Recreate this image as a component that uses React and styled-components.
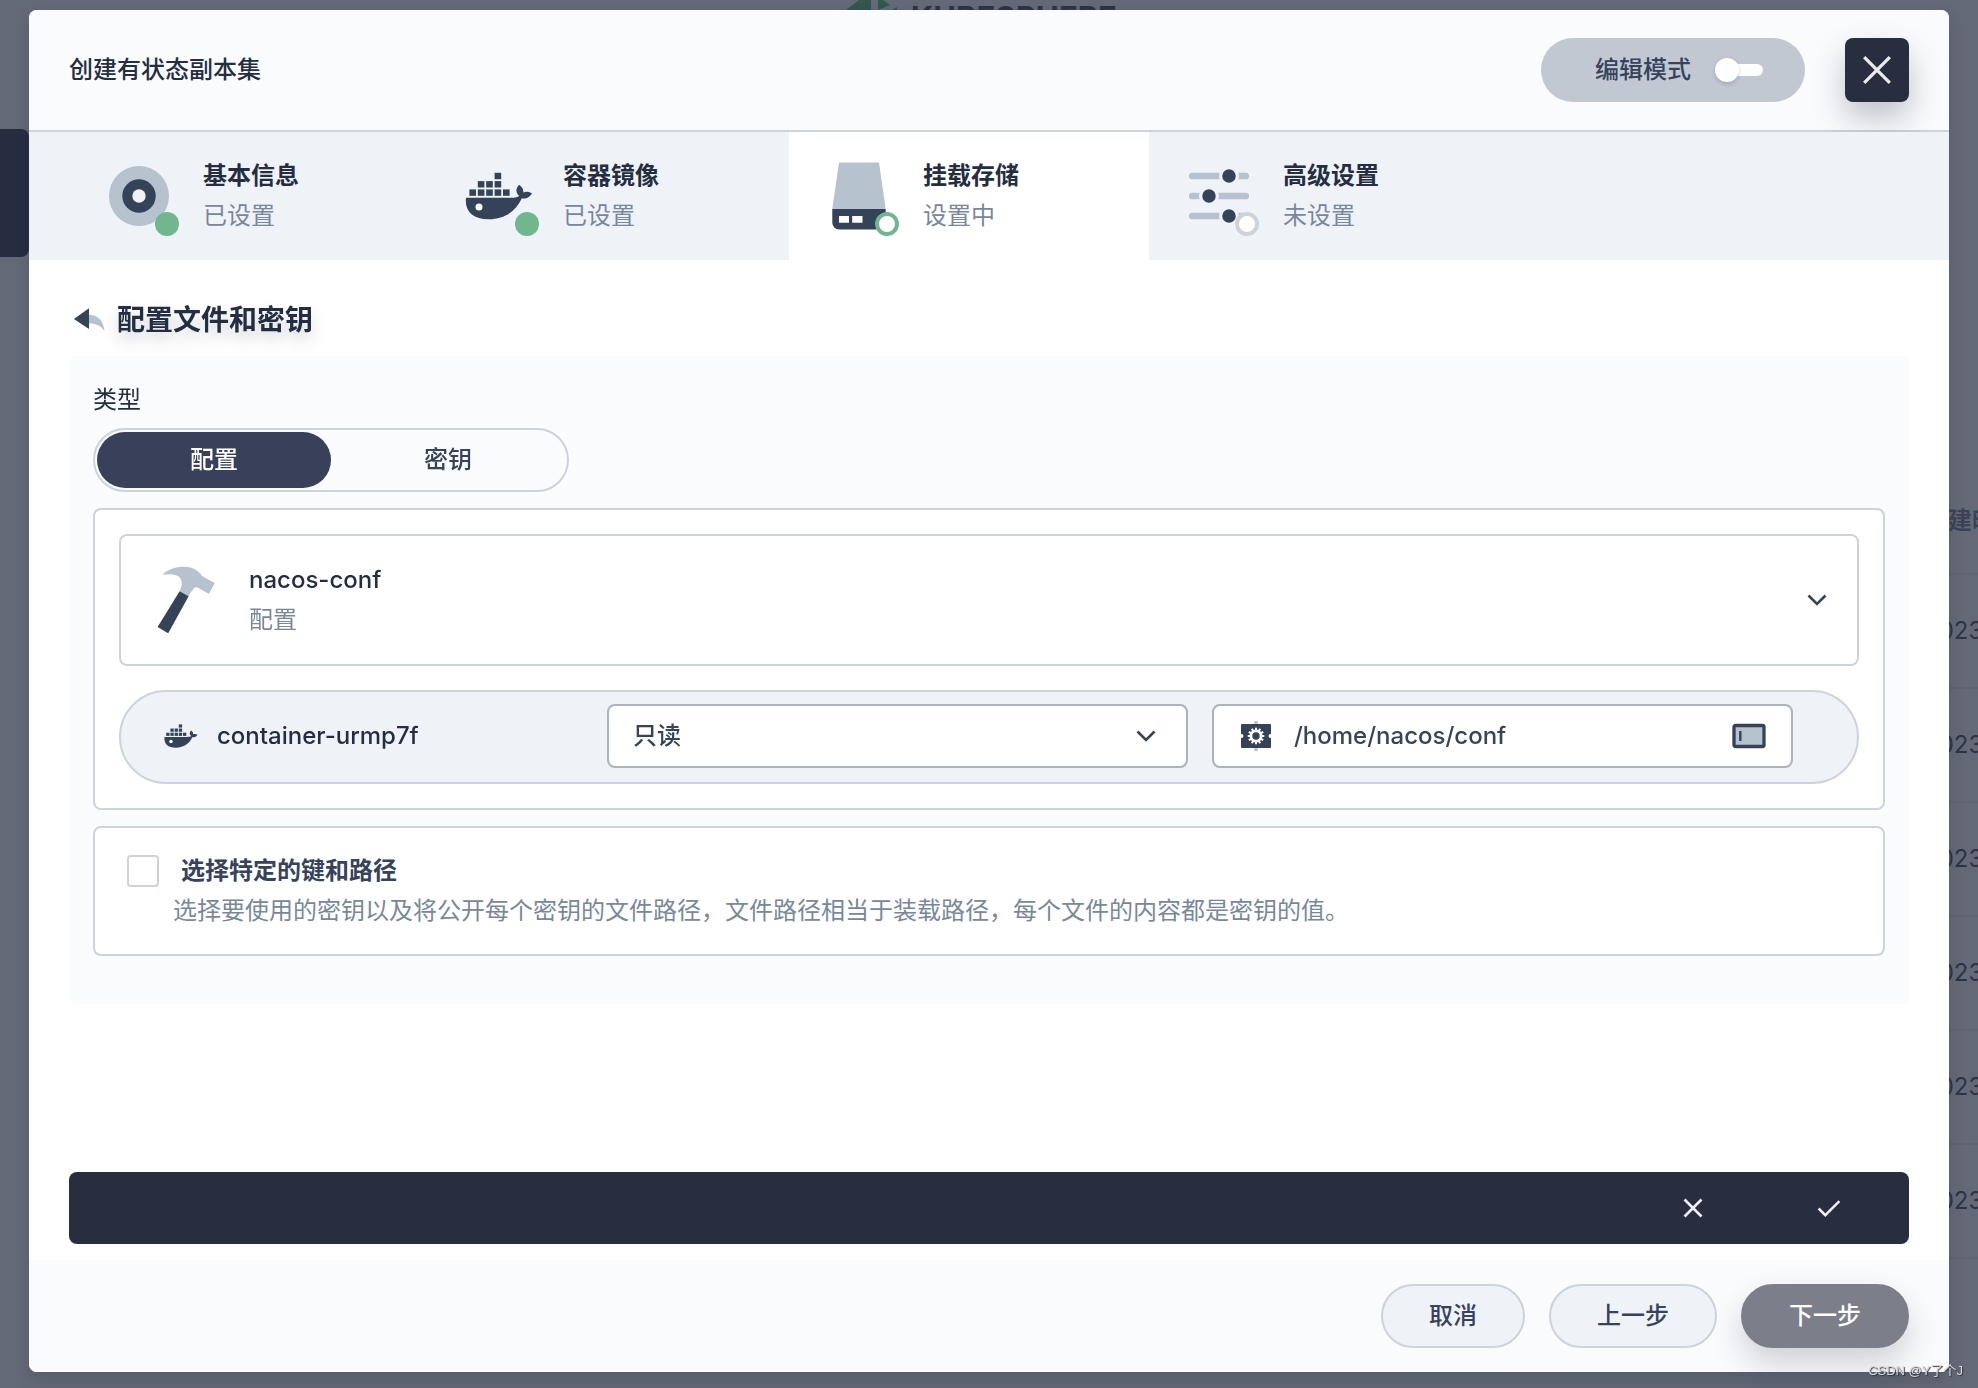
import React, { useState } from 'react'
import styled, { createGlobalStyle, css } from 'styled-components'

const GlobalStyle = createGlobalStyle`
  * {
    box-sizing: border-box;
  }
  body {
    margin: 0;
    background: #646977;
    color: #242e42;
    font-family: Inter, "Noto Sans CJK SC", sans-serif;
    font-size: 24px;
    line-height: 40px;
  }
  button, input, select {
    margin: 0;
    padding: 0;
    border: none;
    background: none;
    color: inherit;
    font: inherit;
    outline: none;
  }
  button {
    cursor: pointer;
  }
  h1, h2, p {
    margin: 0;
  }
  svg {
    display: block;
    flex: none;
  }
`

/* dimmed page behind the dialog */
const Backdrop = styled.div`
  position: fixed;
  inset: 0;
  overflow: hidden;
  display: flex;
  flex-direction: column;
  background: #646977;
`
const BackHeader = styled.div`
  display: flex;
  justify-content: center;
  align-items: flex-start;
  gap: 14px;
  height: 129px;
  padding-right: 14px;
  color: #2d3347;
  font-size: 31px;
  font-weight: 700;
  line-height: 36px;
`
const BackMain = styled.div`
  display: flex;
  justify-content: space-between;
`
const BackNav = styled.div`
  width: 29px;
  height: 128px;
  border-radius: 0 8px 8px 0;
  background: #262d40;
`
const BackTable = styled.div`
  width: 54px;
  padding-top: 340px;
  overflow: hidden;
  white-space: nowrap;
`
const BackHead = styled.div`
  height: 106px;
  padding-top: 32px;
  border-bottom: 2px solid #5e6473;
  color: #3b4359;
  font-weight: 600;
`
const BackRow = styled.div`
  height: 114px;
  padding-top: 36px;
  border-bottom: 2px solid #5e6473;
  color: #2c3347;
`

const Overlay = styled.div`
  position: relative;
  min-height: 100vh;
  padding: 10px 29px 16px;
  display: flex;
`
const Modal = styled.div`
  flex: 1;
  display: flex;
  flex-direction: column;
  border-radius: 8px;
  background: #fff;
  box-shadow: 0 8px 16px rgba(36, 46, 66, 0.2);
`
const Header = styled.header`
  display: flex;
  align-items: center;
  justify-content: space-between;
  padding: 28px 40px;
  border-bottom: 2px solid #ccd3db;
  border-radius: 8px 8px 0 0;
  background: #fafbfd;
`
const Title = styled.h1`
  font-size: 24px;
  font-weight: 500;
`
const HeaderActions = styled.div`
  display: flex;
  gap: 40px;
`
const ModeSwitch = styled.label`
  display: flex;
  align-items: center;
  gap: 24px;
  height: 64px;
  padding: 0 42px 0 54px;
  border-radius: 32px;
  background: #c1c8d1;
  color: #36435c;
  font-weight: 500;
  cursor: pointer;
`
const Toggle = styled.input`
  appearance: none;
  display: flex;
  align-items: center;
  width: 48px;
  height: 12px;
  border-radius: 6px;
  background: #fff;

  &::before {
    content: "";
    width: 24px;
    height: 24px;
    border-radius: 50%;
    background: #fff;
    box-shadow: 0 2px 4px rgba(36, 46, 66, 0.2);
  }
  &:checked {
    justify-content: flex-end;
  }
`
const CloseButton = styled.button`
  display: flex;
  align-items: center;
  justify-content: center;
  width: 64px;
  height: 64px;
  border-radius: 8px;
  background: #282d40;
  box-shadow: 0 16px 32px rgba(36, 46, 66, 0.28);
`

const Tabs = styled.nav`
  display: flex;
  padding: 0 40px;
  background: #eff2f7;
`
const Tab = styled.button`
  display: flex;
  align-items: center;
  gap: 24px;
  width: 360px;
  height: 128px;
  padding-left: 30px;
  text-align: left;
  background: ${(props) => (props.$active ? '#fff' : 'transparent')};
`
const TabIcon = styled.span`
  position: relative;
`
const dotStyles = {
  done: css`
    background: #70b78f;
  `,
  current: css`
    background: #fff;
    border: 4px solid #70b78f;
  `,
  pending: css`
    background: #fff;
    border: 4px solid #ccd3db;
  `,
}
const Dot = styled.span`
  position: absolute;
  right: 0;
  bottom: 0;
  width: 24px;
  height: 24px;
  border-radius: 50%;
  ${(props) => dotStyles[props.$state]}
`
const TwoLines = styled.span`
  display: flex;
  flex-direction: column;
`
const Strong = styled.span`
  font-weight: ${(props) => (props.$bold ? 600 : 500)};
`
const Muted = styled.span`
  color: #79879c;
`

const Body = styled.main`
  flex: 1;
  display: flex;
  flex-direction: column;
  padding: 40px 40px 16px;
`
const SubTitle = styled.div`
  display: flex;
  align-items: center;
  gap: 8px;
  margin-bottom: 16px;
`
const SubTitleText = styled.h2`
  font-size: 28px;
  font-weight: 600;
  text-shadow: 0 8px 16px rgba(36, 46, 66, 0.2);
`
const Panel = styled.section`
  display: flex;
  flex-direction: column;
  gap: 16px;
  padding: 24px 24px 48px;
  border-radius: 8px;
  background: #fafbfd;
`
const TypeField = styled.div`
  display: flex;
  flex-direction: column;
  align-items: flex-start;
  gap: 8px;
`
const Segmented = styled.div`
  display: flex;
  padding: 2px;
  border: 2px solid #ccd3db;
  border-radius: 32px;
`
const Segment = styled.button`
  width: 234px;
  height: 56px;
  border-radius: 28px;
  font-weight: 500;
  color: ${(props) => (props.$active ? '#fff' : '#36435c')};
  background: ${(props) => (props.$active ? '#384159' : 'transparent')};
`
const Card = styled.div`
  display: flex;
  flex-direction: column;
  gap: 24px;
  padding: 24px;
  border: 2px solid #ccd3db;
  border-radius: 8px;
  background: #fff;
`
const ConfigSelect = styled.button`
  display: flex;
  align-items: center;
  gap: 24px;
  padding: 24px;
  border: 2px solid #ccd3db;
  border-radius: 8px;
  text-align: left;

  ${TwoLines} {
    flex: 1;
  }
`
const ContainerRow = styled.div`
  display: grid;
  grid-template-columns: 422px minmax(0, 1fr) minmax(0, 1fr);
  gap: 24px;
  padding: 12px 64px 14px 40px;
  border: 2px solid #ccd3db;
  border-radius: 47px;
  background: #eff2f7;
`
const ContainerName = styled.div`
  display: flex;
  align-items: center;
  gap: 16px;
  font-weight: 500;
`
const Field = styled.label`
  display: flex;
  align-items: center;
  gap: 18px;
  height: 64px;
  padding: 0 ${(props) => props.$pad}px;
  border: 2px solid #abb4be;
  border-radius: 8px;
  background: #fff;
  color: #36435c;
  font-weight: 500;
`
const Select = styled.select`
  appearance: none;
  flex: 1;
  min-width: 0;
  height: 40px;
`
const PathInput = styled.input`
  flex: 1;
  min-width: 0;
  height: 40px;
`
const KeyCard = styled.label`
  display: grid;
  grid-template-columns: 32px 1fr;
  column-gap: 22px;
  align-items: center;
  padding: 23px 32px;
  border: 2px solid #ccd3db;
  border-radius: 8px;
  background: #fff;
  color: #36435c;
`
const Checkbox = styled.input`
  appearance: none;
  width: 32px;
  height: 32px;
  border: 2px solid #ccd3db;
  border-radius: 4px;
  background: #fff;

  &:checked {
    background: #36435c;
  }
`
const KeyHint = styled(Muted)`
  grid-column: 1 / -1;
  padding-left: 46px;
`
const ActionBar = styled.div`
  display: flex;
  justify-content: flex-end;
  gap: 96px;
  margin-top: auto;
  padding: 16px 60px;
  border-radius: 8px;
  background: #282d40;
`
const Footer = styled.footer`
  display: flex;
  justify-content: flex-end;
  gap: 24px;
  padding: 24px 40px;
  border-radius: 0 0 8px 8px;
  background: #fafbfd;
`
const FooterButton = styled.button`
  height: 64px;
  padding: 0 46px;
  border: 2px solid #ccd3db;
  border-radius: 32px;
  background: #eff2f7;
  color: #36435c;
  font-weight: 500;

  ${(props) =>
    props.$primary &&
    css`
      border-color: #7c7f8a;
      background: #7c7f8a;
      color: #fff;
      box-shadow: 0 16px 32px rgba(36, 46, 66, 0.2);
    `}
`
const Watermark = styled.div`
  position: absolute;
  right: 15px;
  bottom: 5px;
  color: #d6d8dc;
  font-family: "Liberation Sans", "Noto Sans CJK SC", sans-serif;
  font-size: 13px;
  line-height: 24px;
  text-shadow: 1px 1px 1px #333;
`

const DARK = '#344357'
const LIGHT = '#b6c2cd'

const BasicIcon = () => (
  <svg width="80" height="80" viewBox="0 0 80 80">
    <circle cx="40" cy="40" r="30" fill={LIGHT} />
    <circle cx="40" cy="40" r="16.7" fill={DARK} />
    <circle cx="40" cy="40" r="6.7" fill="#eff2f7" />
  </svg>
)

const boxes = [
  [35.6, 16.8],
  [18.8, 25.1], [27.2, 25.1], [35.6, 25.1],
  [10.4, 33.4], [18.8, 33.4], [27.2, 33.4], [35.6, 33.4], [44, 33.4],
]

const DockerIcon = ({ size = 80 }) => (
  <svg width={size} height={size} viewBox="0 0 80 80" fill={DARK}>
    {boxes.map(([x, y]) => (
      <rect key={`${x}-${y}`} x={x} y={y} width="6.6" height="6.4" />
    ))}
    <path d="M7 41.8H52c4 0 6.8-.6 8.3-1.8C56.6 36.800 56.4 32.8 60 28.8c3 1.9 4.6 4.2 4.3 7.6 2.900-1 6-.7 8.7 1C71 41 67.5 42.7 62.7 42.6 57.5 54 47 63.3 29.5 63.3 14 63.3 5.5 55.5 7 41.8Z" />
    <circle cx="20" cy="51" r="3.5" fill="#fff" />
  </svg>
)

const StorageIcon = () => (
  <svg width="80" height="80" viewBox="0 0 80 80">
    <path d="M20 6.5H60L66.7 53H13.3Z" fill={LIGHT} />
    <path d="M13.3 53H66.7V66.7a6.7 6.7 0 0 1-6.7 6.7H20a6.7 6.7 0 0 1-6.7-6.7Z" fill={DARK} />
    <path d="M20 60H30V66.700H20ZM33.2 60H43.5V66.700H33.2Z" fill="#fff" />
  </svg>
)

const AdvancedIcon = () => (
  <svg width="80" height="80" viewBox="0 0 80 80">
    <path d="M13.3 20H66.7M13.3 40H66.7M13.3 60H66.7" stroke={LIGHT} strokeWidth="6.7" strokeLinecap="round" />
    <g fill={DARK} stroke="#eff2f7" strokeWidth="3.3">
      <circle cx="50" cy="20" r="8.4" />
      <circle cx="30" cy="40" r="8.4" />
      <circle cx="50" cy="60" r="8.4" />
    </g>
  </svg>
)

const HammerIcon = () => (
  <svg width="80" height="80" viewBox="0 0 80 80">
    <path d="M17.4 14.8C23 9 31 6.7 38.7 6.7c8 0 14.3 3 18.3 9.3l12.7 7L64 34l-10.5-6c-2-1.1-3.5-.8-4.8.8-2 2.4-3.8 4.7-5.1 7.4L34.6 31.3C36.8 27 37.5 23.5 36.2 20 34.5 15.5 29 13.2 17.4 14.8Z" fill={LIGHT} />
    <path d="M34.6 31.3 43.6 36.3 23.2 73.3 12.6 67Z" fill={DARK} />
  </svg>
)

const BackIcon = () => (
  <svg width="40" height="40" viewBox="0 0 40 40">
    <path d="M19 14.8C28 14.5 34.5 20 35.5 31 31.5 25.5 27 23.3 19 23.5Z" fill={LIGHT} />
    <path d="M4.9 19 20 8.3V29Z" fill={DARK} />
  </svg>
)

const ChevronIcon = () => (
  <svg width="32" height="32" viewBox="0 0 32 32" fill="none" stroke={DARK} strokeWidth="2.6">
    <path d="M7.5 11.5 16 20 24.5 11.5" />
  </svg>
)

const CrossIcon = () => (
  <svg width="40" height="40" viewBox="0 0 40 40" fill="none" stroke="#eff0f2" strokeWidth="2.6">
    <path d="M11.5 11.5 28.5 28.5M28.5 11.5 11.5 28.5" />
  </svg>
)

const CloseIcon = () => (
  <svg width="40" height="40" viewBox="0 0 40 40" fill="none" stroke="#eaebed" strokeWidth="3.3">
    <path d="M7.2 7.2 32.8 32.8M32.8 7.2 7.2 32.8" />
  </svg>
)

const CheckIcon = () => (
  <svg width="40" height="40" viewBox="0 0 40 40" fill="none" stroke="#eff0f2" strokeWidth="2.5">
    <path d="M9.6 20.5 16.3 27.2 30.4 13.1" />
  </svg>
)

const teeth = [0, 30, 60, 90, 120, 150, 180, 210, 240, 270, 300, 330]

const GearIcon = () => (
  <svg width="40" height="40" viewBox="0 0 40 40">
    <path d="M18.3 5H21.7V35H18.3Z" fill={LIGHT} />
    <rect x="5" y="8" width="30" height="24" rx="1" fill={DARK} />
    <g fill="#fff">
      <circle cx="5.5" cy="20" r="2" />
      <circle cx="34.5" cy="20" r="2" />
      {teeth.map((deg) => (
        <rect key={deg} x="19" y="11.7" width="2" height="4" transform={`rotate(${deg} 20 20)`} />
      ))}
      <circle cx="20" cy="20" r="6.5" />
    </g>
    <circle cx="20" cy="20" r="3.7" fill={DARK} />
  </svg>
)

const SubPathIcon = () => (
  <svg width="40" height="40" viewBox="0 0 40 40">
    <rect x="5" y="9.5" width="30" height="21" rx="1.5" fill={LIGHT} stroke={DARK} strokeWidth="3.3" />
    <path d="M11.3 15V25" stroke={DARK} strokeWidth="2.4" />
  </svg>
)

const LogoMark = () => (
  <svg width="50" height="10" viewBox="0 0 50 10" fill="#31574f">
    <path d="M0 9 12 0H24V10H0ZM31 0H36L43 5 31 10Z" />
    <path d="M50 7V10H45Z" />
  </svg>
)

const steps = [
  { title: '基本信息', desc: '已设置', state: 'done', icon: <BasicIcon /> },
  { title: '容器镜像', desc: '已设置', state: 'done', icon: <DockerIcon /> },
  { title: '挂载存储', desc: '设置中', state: 'current', icon: <StorageIcon /> },
  { title: '高级设置', desc: '未设置', state: 'pending', icon: <AdvancedIcon /> },
]

const App = () => {
  const [type, setType] = useState('配置')
  const [path, setPath] = useState('/home/nacos/conf')

  return (
    <>
      <GlobalStyle />
      <Backdrop aria-hidden="true">
        <BackHeader>
          <LogoMark />
          <span>KUBESPHERE</span>
        </BackHeader>
        <BackMain>
          <BackNav />
          <BackTable>
            <BackHead>创建时间</BackHead>
            {[1, 2, 3, 4, 5, 6].map((row) => (
              <BackRow key={row}>2023</BackRow>
            ))}
          </BackTable>
        </BackMain>
      </Backdrop>

      <Overlay>
        <Modal role="dialog" aria-labelledby="dialog-title">
          <Header>
            <Title id="dialog-title">创建有状态副本集</Title>
            <HeaderActions>
              <ModeSwitch>
                编辑模式
                <Toggle type="checkbox" />
              </ModeSwitch>
              <CloseButton aria-label="关闭">
                <CloseIcon />
              </CloseButton>
            </HeaderActions>
          </Header>

          <Tabs>
            {steps.map((step) => (
              <Tab key={step.title} $active={step.state === 'current'}>
                <TabIcon>
                  {step.icon}
                  <Dot $state={step.state} />
                </TabIcon>
                <TwoLines>
                  <Strong $bold>{step.title}</Strong>
                  <Muted>{step.desc}</Muted>
                </TwoLines>
              </Tab>
            ))}
          </Tabs>

          <Body>
            <SubTitle>
              <button aria-label="返回">
                <BackIcon />
              </button>
              <SubTitleText>配置文件和密钥</SubTitleText>
            </SubTitle>

            <Panel>
              <TypeField>
                <span id="type-label">类型</span>
                <Segmented role="group" aria-labelledby="type-label">
                  {['配置', '密钥'].map((item) => (
                    <Segment key={item} $active={type === item} onClick={() => setType(item)}>
                      {item}
                    </Segment>
                  ))}
                </Segmented>
              </TypeField>

              <Card>
                <ConfigSelect aria-haspopup="listbox">
                  <HammerIcon />
                  <TwoLines>
                    <Strong>nacos-conf</Strong>
                    <Muted>配置</Muted>
                  </TwoLines>
                  <ChevronIcon />
                </ConfigSelect>
                <ContainerRow>
                  <ContainerName>
                    <DockerIcon size={40} />
                    container-urmp7f
                  </ContainerName>
                  <Field $pad={24}>
                    <Select aria-label="读写权限" defaultValue="只读">
                      <option>只读</option>
                    </Select>
                    <ChevronIcon />
                  </Field>
                  <Field $pad={22}>
                    <GearIcon />
                    <PathInput
                      type="text"
                      aria-label="挂载路径"
                      value={path}
                      onChange={(e) => setPath(e.target.value)}
                    />
                    <SubPathIcon />
                  </Field>
                </ContainerRow>
              </Card>

              <KeyCard>
                <Checkbox type="checkbox" />
                <Strong $bold>选择特定的键和路径</Strong>
                <KeyHint>
                  选择要使用的密钥以及将公开每个密钥的文件路径，文件路径相当于装载路径，每个文件的内容都是密钥的值。
                </KeyHint>
              </KeyCard>
            </Panel>

            <ActionBar>
              <button aria-label="放弃">
                <CrossIcon />
              </button>
              <button aria-label="确定">
                <CheckIcon />
              </button>
            </ActionBar>
          </Body>

          <Footer>
            <FooterButton>取消</FooterButton>
            <FooterButton>上一步</FooterButton>
            <FooterButton $primary>下一步</FooterButton>
          </Footer>
        </Modal>
        <Watermark>CSDN @Y了个J</Watermark>
      </Overlay>
    </>
  )
}

export default App
